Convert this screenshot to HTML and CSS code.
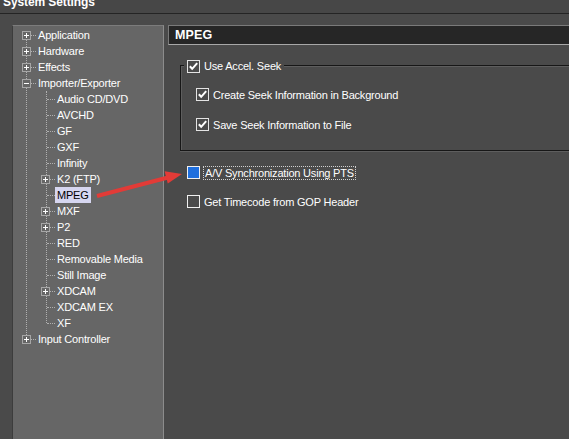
FILE: index.html
```html
<!DOCTYPE html>
<html>
<head>
<meta charset="utf-8">
<link rel="stylesheet" href="styles.css">
</head>
<body>
<div class="titlebar"><div class="title">System Settings</div></div>
<div class="main">
  <div class="panel">
    <ul class="tree">
      <li><div class="row top"><span class="exp"><svg width="9" height="9"><rect x="0.5" y="0.5" width="8" height="8" fill="#666" stroke="#a6a6a6"/><path d="M2 4.5h5M4.5 2v5" stroke="#fff"/></svg></span><span class="stub"></span><span class="label">Application</span></div></li>
      <li><div class="row top"><span class="exp"><svg width="9" height="9"><rect x="0.5" y="0.5" width="8" height="8" fill="#666" stroke="#a6a6a6"/><path d="M2 4.5h5M4.5 2v5" stroke="#fff"/></svg></span><span class="stub"></span><span class="label">Hardware</span></div></li>
      <li><div class="row top"><span class="exp"><svg width="9" height="9"><rect x="0.5" y="0.5" width="8" height="8" fill="#666" stroke="#a6a6a6"/><path d="M2 4.5h5M4.5 2v5" stroke="#fff"/></svg></span><span class="stub"></span><span class="label">Effects</span></div></li>
      <li>
        <div class="row top"><span class="exp"><svg width="9" height="9"><rect x="0.5" y="0.5" width="8" height="8" fill="#666" stroke="#a6a6a6"/><path d="M2 4.5h5" stroke="#fff"/></svg></span><span class="stub"></span><span class="label">Importer/Exporter</span></div>
        <ul class="sub">
          <li><div class="row leaf"><span class="stub long"></span><span class="label">Audio CD/DVD</span></div></li>
          <li><div class="row leaf"><span class="stub long"></span><span class="label">AVCHD</span></div></li>
          <li><div class="row leaf"><span class="stub long"></span><span class="label">GF</span></div></li>
          <li><div class="row leaf"><span class="stub long"></span><span class="label">GXF</span></div></li>
          <li><div class="row leaf"><span class="stub long"></span><span class="label">Infinity</span></div></li>
          <li><div class="row child"><span class="exp"><svg width="9" height="9"><rect x="0.5" y="0.5" width="8" height="8" fill="#666" stroke="#a6a6a6"/><path d="M2 4.5h5M4.5 2v5" stroke="#fff"/></svg></span><span class="stub"></span><span class="label">K2 (FTP)</span></div></li>
          <li><div class="row leaf"><span class="stub long"></span><span class="label sel">MPEG</span></div></li>
          <li><div class="row child"><span class="exp"><svg width="9" height="9"><rect x="0.5" y="0.5" width="8" height="8" fill="#666" stroke="#a6a6a6"/><path d="M2 4.5h5M4.5 2v5" stroke="#fff"/></svg></span><span class="stub"></span><span class="label">MXF</span></div></li>
          <li><div class="row child"><span class="exp"><svg width="9" height="9"><rect x="0.5" y="0.5" width="8" height="8" fill="#666" stroke="#a6a6a6"/><path d="M2 4.5h5M4.5 2v5" stroke="#fff"/></svg></span><span class="stub"></span><span class="label">P2</span></div></li>
          <li><div class="row leaf"><span class="stub long"></span><span class="label">RED</span></div></li>
          <li><div class="row leaf"><span class="stub long"></span><span class="label">Removable Media</span></div></li>
          <li><div class="row leaf"><span class="stub long"></span><span class="label">Still Image</span></div></li>
          <li><div class="row child"><span class="exp"><svg width="9" height="9"><rect x="0.5" y="0.5" width="8" height="8" fill="#666" stroke="#a6a6a6"/><path d="M2 4.5h5M4.5 2v5" stroke="#fff"/></svg></span><span class="stub"></span><span class="label">XDCAM</span></div></li>
          <li><div class="row leaf"><span class="stub long"></span><span class="label">XDCAM EX</span></div></li>
          <li><div class="row leaf"><span class="stub long"></span><span class="label">XF</span></div></li>
        </ul>
      </li>
      <li><div class="row top"><span class="exp"><svg width="9" height="9"><rect x="0.5" y="0.5" width="8" height="8" fill="#666" stroke="#a6a6a6"/><path d="M2 4.5h5M4.5 2v5" stroke="#fff"/></svg></span><span class="stub"></span><span class="label">Input Controller</span></div></li>
    </ul>
  </div>
  <div class="content">
    <div class="header">MPEG</div>
    <div class="group">
      <div class="legend check">
        <svg class="box" width="13" height="13"><rect x="0.5" y="0.5" width="12" height="12" fill="#4a4a4a" stroke="#e4e4e4"/><path d="M2.8 6.2l2.4 2.6l5-5.6" fill="none" stroke="#fff" stroke-width="2"/></svg>
        <span>Use Accel. Seek</span>
      </div>
      <div class="opts">
        <div class="check">
          <svg class="box" width="13" height="13"><rect x="0.5" y="0.5" width="12" height="12" fill="#4a4a4a" stroke="#e4e4e4"/><path d="M2.8 6.2l2.4 2.6l5-5.6" fill="none" stroke="#fff" stroke-width="2"/></svg>
          <span>Create Seek Information in Background</span>
        </div>
        <div class="check">
          <svg class="box" width="13" height="13"><rect x="0.5" y="0.5" width="12" height="12" fill="#4a4a4a" stroke="#e4e4e4"/><path d="M2.8 6.2l2.4 2.6l5-5.6" fill="none" stroke="#fff" stroke-width="2"/></svg>
          <span>Save Seek Information to File</span>
        </div>
      </div>
    </div>
    <div class="check outer av">
      <svg class="box" width="13" height="13"><rect x="0.5" y="0.5" width="12" height="12" fill="#1f6fde" stroke="#f0f0f0"/></svg>
      <span class="focus">A/V Synchronization Using PTS</span>
    </div>
    <div class="check outer gop">
      <svg class="box" width="13" height="13"><rect x="0.5" y="0.5" width="12" height="12" fill="#4a4a4a" stroke="#f0f0f0"/></svg>
      <span>Get Timecode from GOP Header</span>
    </div>
  </div>
</div>
<svg class="arrow" width="569" height="439">
  <line x1="97" y1="196" x2="168" y2="177.5" stroke="#e23b37" stroke-width="4"/>
  <polygon points="182,174 167.8,183.6 164.6,171.2" fill="#e23b37"/>
</svg>
</body>
</html>
```
FILE: styles.css
```css
html, body {
  margin: 0;
  padding: 0;
}
body {
  width: 569px;
  height: 439px;
  overflow: hidden;
  background: #4a4a4a;
  color: #fff;
  font-family: "Liberation Sans", Arial, sans-serif;
  font-size: 11px;
  letter-spacing: -0.2px;
  position: relative;
}
.titlebar {
  height: 13px;
  overflow: hidden;
  background: #474747;
  border-bottom: 1px solid #242424;
  padding-left: 3px;
}
.title {
  margin-top: -4px;
  font-weight: bold;
  font-size: 12px;
  line-height: 13px;
  letter-spacing: -0.1px;
}
.main {
  display: flex;
  gap: 4px;
  padding: 11px 0 0 12px;
  height: 425px;
  box-sizing: border-box;
}
.panel {
  width: 152px;
  flex-shrink: 0;
  box-sizing: border-box;
  background: #666;
  border-left: 1px solid #3c3c3c;
  border-top: 1px solid #7c7c7c;
  border-right: 1px solid #8c8c8c;
  padding-top: 1px;
}
.tree, .sub {
  list-style: none;
  margin: 0;
  padding: 0;
  position: relative;
}
.tree::before {
  content: "";
  position: absolute;
  left: 13px;
  top: 8px;
  bottom: 8px;
  border-left: 1px dotted #b0b0b0;
}
.sub::before {
  content: "";
  position: absolute;
  left: 33px;
  top: 0;
  bottom: 8px;
  border-left: 1px dotted #b0b0b0;
}
.row {
  display: flex;
  align-items: center;
  height: 16px;
}
.row.top { padding-left: 9px; }
.row.child { padding-left: 28px; }
.row.leaf { padding-left: 34px; }
.exp {
  position: relative;
  z-index: 1;
  width: 9px;
  height: 9px;
  display: block;
}
.exp svg { display: block; shape-rendering: crispEdges; }
.stub {
  width: 5px;
  height: 0;
  border-top: 1px dotted #b0b0b0;
  margin-right: 2px;
}
.stub.long { width: 8px; }
.label {
  line-height: 16px;
  white-space: nowrap;
}
.label.sel {
  background: #d6d6f0;
  color: #000;
  padding: 0 2px;
  margin-left: -2px;
}
.content {
  flex: 1;
  min-width: 0;
  overflow: hidden;
  padding-top: 7px;
  margin-top: -7px;
}
.header {
  height: 20px;
  box-sizing: border-box;
  background: #262626;
  border: 1px solid #7a7a7a;
  border-bottom-color: #a8a8a8;
  border-right: none;
  padding-left: 6px;
  line-height: 18px;
  font-weight: bold;
  font-size: 12.5px;
  letter-spacing: 0.1px;
}
.group {
  margin: 20px 0 0 12px;
  border-top: 1px solid #171717;
  border-left: 1px solid #171717;
  border-bottom: 1px solid #171717;
  box-shadow: inset 1px 1px 0 #5e5e5e, 0 1px 0 #5e5e5e;
}
.check {
  display: flex;
  align-items: center;
  gap: 4px;
  height: 13px;
  white-space: nowrap;
}
.box { display: block; flex-shrink: 0; shape-rendering: crispEdges; }
.box path { shape-rendering: auto; }
.legend {
  width: fit-content;
  height: 14px;
  margin: -7px 0 0 3px;
  padding: 0 3px;
  background: #4a4a4a;
}
.opts {
  padding: 15px 0 19px 15px;
  display: flex;
  flex-direction: column;
  gap: 17px;
}
.outer { margin-left: 19px; }
.av { margin-top: 15px; }
.gop { margin-top: 16px; }
.focus {
  border: 1px dotted #d0d0d0;
  padding: 0 1px;
  line-height: 12px;
  margin-left: -1px;
}
.arrow {
  position: absolute;
  left: 0;
  top: 0;
  pointer-events: none;
}
```
